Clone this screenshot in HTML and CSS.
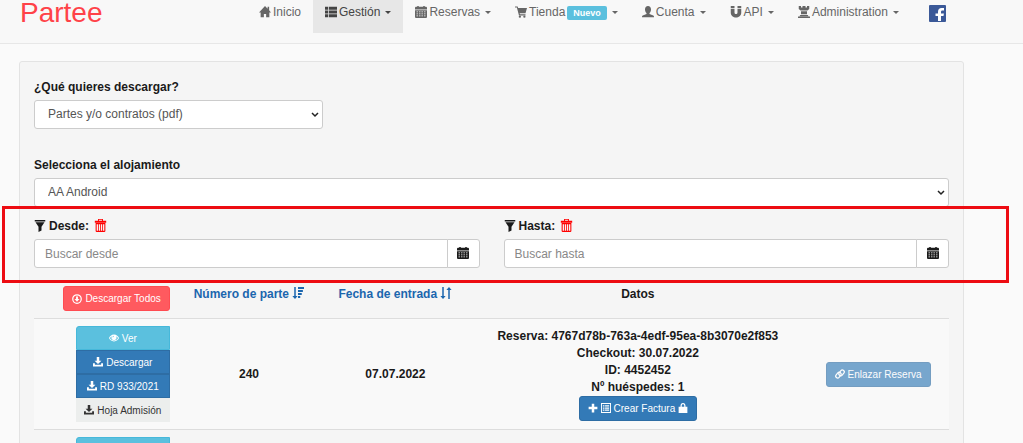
FILE: index.html
```
<!DOCTYPE html>
<html lang="es">
<head>
    <meta charset="UTF-8">
    <meta name="viewport" content="width=device-width, initial-scale=1.0">
    <title>Partee</title>
    <link rel="stylesheet" href="styles.css">
</head>
<body>
    <!-- Iconos -->
    <svg class="sprite" aria-hidden="true">
        <symbol id="i-home" viewBox="0 0 16 16"><path d="M8 0 0 8.500h2.200V15h4.300v-4.500h3V15h4.300V8.500H16l-2.500-2.700V1h-2v2.700z"/></symbol>
        <symbol id="i-list" viewBox="0 0 16 16"><path d="M0 1h4v4H0zM5 1h11v4H5zM0 6h4v4H0zM5 6h11v4H5zM0 11h4v4H0zM5 11h11v4H5z"/></symbol>
        <symbol id="i-calendar" viewBox="0 0 16 16"><path fill-rule="evenodd" d="M3 0h2v1h6V0h2v1h2l1 1v2.500H0V2l1-1h2zM0 5.500h16V15l-1 1H1l-1-1zM2 7.200v1h2v-1zm3.300 0v1h2v-1zm3.300 0v1h2v-1zm3.400 0v1h2v-1zM2 10v1h2v-1zm3.300 0v1h2v-1zm3.300 0v1h2v-1zm3.400 0v1h2v-1zM2 12.800v1h2v-1zm3.300 0v1h2v-1zm3.300 0v1h2v-1zm3.400 0v1h2v-1z"/></symbol>
        <symbol id="i-cart" viewBox="0 0 16 16"><path d="M0 .5h3.500l.7 2H16l-2 7H6.200l.4 1.500H14v1.500H5.300L2.500 2H0z"/><circle cx="6.500" cy="14.300" r="1.500"/><circle cx="12.500" cy="14.300" r="1.500"/></symbol>
        <symbol id="i-user" viewBox="0 0 16 16"><path d="M8 0c2.500 0 4 1.800 4 4.500 0 2-.8 3.800-2 4.800v1.200l5 2.200c.7.300 1 .8 1 1.500V15H0v-.8c0-.7.300-1.200 1-1.500l5-2.200V9.300c-1.200-1-2-2.800-2-4.800C4 1.800 5.500 0 8 0z"/></symbol>
        <symbol id="i-magnet" viewBox="0 0 16 16"><path d="M1 0h5v3H1zM10 0h5v3h-5zM1 4h5v4.500c0 3 4 3 4 0V4h5v4.500c0 9-14 9-14 0z"/></symbol>
        <symbol id="i-tower" viewBox="0 0 16 16"><path d="M1 0h3v2h2V0h4v2h2V0h3v4l-2.500 2h-9L1 4zM4 7h8v4H4zM3 12h10l1 1.500H2zM0 14h16v2H0z"/></symbol>
        <symbol id="i-filter" viewBox="0 0 16 16"><path d="M1 0h14v2H1zM2 3h12l-4 6v5l-4 2V9z"/></symbol>
        <symbol id="i-trash" viewBox="0 0 16 16"><path fill-rule="evenodd" d="M5 0h6v2h4v2.500H1V2h4zm1.200 1v1h3.600V1zM2 5h12v10l-1 1H3l-1-1zM3.300 6.500v8h1.600v-8zm2.600 0v8h1.600v-8zm2.600 0v8h1.600v-8zm2.600 0v8h1.600v-8z"/></symbol>
        <symbol id="i-down-circle" viewBox="0 0 16 16"><circle cx="8" cy="8" r="6.800" fill="none" stroke="currentColor" stroke-width="2"/><path d="M6.500 4h3v4H12l-4 4.500L4 8h2.500z"/></symbol>
        <symbol id="i-sort-size" viewBox="0 0 16 16"><path d="M3 0h2v12h2.500L4 16 .5 12H3zM8 0h8v2.500H8zM8 4h6.500v2.500H8zM8 8h5v2.500H8zM8 12h3v2.500H8z"/></symbol>
        <symbol id="i-sort" viewBox="0 0 16 16"><path d="M3 0h2v12h2.500L4 16 .5 12H3zM11 16V4H8.500L12 0l3.500 4H13v12z"/></symbol>
        <symbol id="i-eye" viewBox="0 0 16 16"><path fill-rule="evenodd" d="M8 2.500c4 0 7 3 8 5.500-1 2.500-4 5.500-8 5.500S1 10.500 0 8c1-2.500 4-5.500 8-5.500zM4.500 5C3 6 2 7 1.500 8c1 2 3.500 4 6.500 4s5.500-2 6.500-4c-.5-1-1.500-2-3-3 1.700 4-.5 6-3.500 6S2.800 9 4.500 5zm3-.5C6 4.600 5.500 6 6 7c1-.2 2-1 1.500-2.500z"/></symbol>
        <symbol id="i-save" viewBox="0 0 16 16"><path d="M6 0h4v6h3.500L8 11 2.500 6H6zM0 10h3v2.500h10V10h3v5H0z"/></symbol>
        <symbol id="i-plus" viewBox="0 0 16 16"><path d="M6 1h4v5h5v4h-5v5H6v-5H1V6h5z"/></symbol>
        <symbol id="i-sheet" viewBox="0 0 16 16"><path fill-rule="evenodd" d="M0 0h16v16H0zm1.500 1.500v13h13v-13zM3 3.500h2.500v2H3zm3.500 0H13v2H6.500zM3 7h2.500v2H3zm3.500 0H13v2H6.500zM3 10.500h2.500v2H3zm3.500 0H13v2H6.500z"/></symbol>
        <symbol id="i-lock" viewBox="0 0 16 16"><path fill-rule="evenodd" d="M4 6V4.500C4 2 5.500 0 8 0s4 2 4 4.500V6h3v10H1V6zm2 0h4V4.500C10 3 9.300 2 8 2S6 3 6 4.500z"/></symbol>
        <symbol id="i-link" viewBox="0 0 16 16"><g fill="none" stroke="currentColor" stroke-width="2"><rect x="5.500" y="3.200" width="10" height="6" rx="3" transform="rotate(-50 10.500 6.200)"/><rect x=".5" y="6.800" width="10" height="6" rx="3" transform="rotate(-50 5.500 9.800)"/></g></symbol>
    </svg>

    <header class="navbar">
        <a class="brand" href="#">Partee</a>
        <nav class="menu">
            <a class="menu-item" href="#"><svg class="icon"><use href="#i-home"/></svg>Inicio</a>
            <a class="menu-item active" href="#"><svg class="icon"><use href="#i-list"/></svg>Gestión<span class="caret"></span></a>
            <a class="menu-item" href="#"><svg class="icon"><use href="#i-calendar"/></svg>Reservas<span class="caret"></span></a>
            <a class="menu-item" href="#"><svg class="icon"><use href="#i-cart"/></svg>Tienda<span class="badge">Nuevo</span><span class="caret"></span></a>
            <a class="menu-item" href="#"><svg class="icon"><use href="#i-user"/></svg>Cuenta<span class="caret"></span></a>
            <a class="menu-item" href="#"><svg class="icon"><use href="#i-magnet"/></svg>API<span class="caret"></span></a>
            <a class="menu-item" href="#"><svg class="icon"><use href="#i-tower"/></svg>Administration<span class="caret"></span></a>
        </nav>
        <a class="facebook" href="#" aria-label="Facebook">
            <svg viewBox="0 0 17 17"><rect width="17" height="17" rx="1" fill="#3b5998"/><path fill="#fff" d="M9 16v-5H6.500V8.500H9V7c0-2.600 1.300-4 3.600-4H15v2.500h-1.500c-1.200 0-1.500.6-1.500 1.500v1.500h2.900l-.4 2.500H12v5z"/></svg>
        </a>
    </header>

    <main class="panel">
        <div class="field field-short">
            <label for="tipo">¿Qué quieres descargar?</label>
            <div class="select-wrap">
                <select id="tipo" class="control"><option>Partes y/o contratos (pdf)</option></select>
                <svg class="chevron" viewBox="0 0 8 6"><path d="M1 1l3 3 3-3"/></svg>
            </div>
        </div>

        <div class="field">
            <label for="alojamiento">Selecciona el alojamiento</label>
            <div class="select-wrap">
                <select id="alojamiento" class="control"><option>AA Android</option></select>
                <svg class="chevron" viewBox="0 0 8 6"><path d="M1 1l3 3 3-3"/></svg>
            </div>
        </div>

        <div class="filters">
            <div class="filter">
                <div class="filter-head">
                    <svg class="icon"><use href="#i-filter"/></svg>
                    <label for="desde">Desde:</label>
                    <button class="clear" type="button" aria-label="Borrar desde"><svg class="icon"><use href="#i-trash"/></svg></button>
                </div>
                <div class="input-group">
                    <input id="desde" class="control" type="text" placeholder="Buscar desde">
                    <button class="addon" type="button" aria-label="Calendario desde"><svg class="icon"><use href="#i-calendar"/></svg></button>
                </div>
            </div>
            <div class="filter">
                <div class="filter-head">
                    <svg class="icon"><use href="#i-filter"/></svg>
                    <label for="hasta">Hasta:</label>
                    <button class="clear" type="button" aria-label="Borrar hasta"><svg class="icon"><use href="#i-trash"/></svg></button>
                </div>
                <div class="input-group">
                    <input id="hasta" class="control" type="text" placeholder="Buscar hasta">
                    <button class="addon" type="button" aria-label="Calendario hasta"><svg class="icon"><use href="#i-calendar"/></svg></button>
                </div>
            </div>
            <div class="highlight"></div>
        </div>

        <table class="partes">
            <thead>
                <tr>
                    <th class="col-actions"><button class="btn btn-red" type="button"><svg class="icon"><use href="#i-down-circle"/></svg>Descargar Todos</button></th>
                    <th class="col-num"><a href="#">Número de parte <svg class="icon"><use href="#i-sort-size"/></svg></a></th>
                    <th class="col-date"><a href="#">Fecha de entrada <svg class="icon"><use href="#i-sort"/></svg></a></th>
                    <th class="col-data">Datos</th>
                    <th class="col-link"></th>
                </tr>
            </thead>
            <tbody>
                <tr>
                    <td class="col-actions">
                        <div class="btn-stack">
                            <button class="btn btn-info" type="button"><svg class="icon"><use href="#i-eye"/></svg>Ver</button>
                            <button class="btn btn-blue" type="button"><svg class="icon"><use href="#i-save"/></svg>Descargar</button>
                            <button class="btn btn-blue" type="button"><svg class="icon"><use href="#i-save"/></svg>RD 933/2021</button>
                            <button class="btn btn-grey" type="button"><svg class="icon"><use href="#i-save"/></svg>Hoja Admisión</button>
                        </div>
                    </td>
                    <td>240</td>
                    <td>07.07.2022</td>
                    <td class="datos">
                        <div>Reserva: 4767d78b-763a-4edf-95ea-8b3070e2f853</div>
                        <div>Checkout: 30.07.2022</div>
                        <div>ID: 4452452</div>
                        <div>Nº huéspedes: 1</div>
                        <button class="btn btn-blue" type="button"><svg class="icon"><use href="#i-plus"/></svg><svg class="icon"><use href="#i-sheet"/></svg>Crear Factura<svg class="icon"><use href="#i-lock"/></svg></button>
                    </td>
                    <td><button class="btn btn-blue btn-link" type="button" disabled><svg class="icon"><use href="#i-link"/></svg>Enlazar Reserva</button></td>
                </tr>
                <tr>
                    <td class="col-actions">
                        <div class="btn-stack">
                            <button class="btn btn-info" type="button" aria-label="Ver"></button>
                        </div>
                    </td>
                    <td></td>
                    <td></td>
                    <td></td>
                    <td></td>
                </tr>
            </tbody>
        </table>
    </main>
</body>
</html>
```
FILE: styles.css
```
:root {
    --blue: #337ab7;
    --info: #5bc0de;
    --red: #ff5a5f;
    --border: #ccc;
}

* {
    box-sizing: border-box;
}

html {
    overflow: hidden;
}

body {
    margin: 0;
    background: #fafafa;
    color: #1a1a1a;
    font-family: "Liberation Sans", Arial, sans-serif;
    font-size: 12px;
    line-height: 17px;
}

a {
    color: inherit;
    text-decoration: none;
}

button, input, select {
    font: inherit;
}

.sprite {
    display: none;
}

.icon {
    width: 12px;
    height: 12px;
    fill: currentColor;
    flex-shrink: 0;
}

/* Barra superior */
.navbar {
    display: flex;
    align-items: flex-start;
    padding: 0 20px 10px;
    background: #f8f8f8;
    border-bottom: 1px solid #e7e7e7;
}

.brand {
    width: 227px;
    color: #ff4248;
    font-size: 28px;
    line-height: 26px;
}

.menu {
    display: flex;
}

.menu-item {
    display: flex;
    align-items: center;
    gap: 2px;
    padding: 4px 12px 12px;
    color: #666;
    white-space: nowrap;
}

.menu-item .icon {
    margin-bottom: 2px;
}

.menu-item.active {
    background: #e7e7e7;
    color: #444;
}

.caret {
    margin-left: 3px;
    border-top: 3px solid;
    border-left: 3px solid transparent;
    border-right: 3px solid transparent;
}

.badge {
    padding: 0 6px;
    border-radius: 2px;
    background: var(--info);
    color: #fff;
    font-size: 9px;
    font-weight: bold;
    line-height: 14px;
}

.facebook {
    margin: 5px 0 0 18px;
}

.facebook svg {
    display: block;
    width: 17px;
    height: 17px;
}

/* Panel principal */
.panel {
    margin: 17px 59px 0 19px;
    padding: 17px 14px;
    background: #f5f5f5;
    border: 1px solid #e3e3e3;
    border-radius: 3px;
}

label {
    font-weight: bold;
}

.field label {
    display: block;
    margin-bottom: 4px;
}

.field-short {
    width: 289px;
    margin-bottom: 28px;
}

.control {
    width: 100%;
    height: 29px;
    padding: 0 10px;
    border: 1px solid var(--border);
    border-radius: 3px;
    background: #fff;
    color: #555;
}

.control::placeholder {
    color: #888;
}

.select-wrap {
    display: grid;
    align-items: center;
}

.select-wrap > * {
    grid-area: 1 / 1;
}

select.control {
    appearance: none;
    padding: 0 13px;
}

.chevron {
    justify-self: end;
    width: 8px;
    height: 6px;
    margin-right: 4px;
    fill: none;
    stroke: #222;
    stroke-width: 1.5;
    pointer-events: none;
}

.filters {
    position: relative;
    display: grid;
    grid-template-columns: 1fr 1fr;
    gap: 24px;
    padding: 11px 0 18px;
}

.filter-head {
    display: flex;
    align-items: center;
    gap: 3px;
    margin-bottom: 4px;
}

.filter-head .icon {
    margin-bottom: 2px;
}

.clear {
    display: flex;
    margin-left: 2px;
    padding: 0;
    border: 0;
    background: none;
    color: #f00;
}

.clear .icon {
    width: 13px;
    height: 13px;
}

.input-group {
    display: flex;
}

.input-group .control {
    border-radius: 3px 0 0 3px;
}

.addon {
    display: flex;
    align-items: center;
    justify-content: center;
    width: 33px;
    flex-shrink: 0;
    margin-left: -1px;
    padding: 0 0 2px;
    border: 1px solid var(--border);
    border-radius: 0 3px 3px 0;
    background: #fff;
    color: #1a1a1a;
}

/* Recuadro rojo sobre los filtros de fecha */
.highlight {
    position: absolute;
    inset: -1px -60px 3px -32px;
    border: 3px solid #ed0c12;
    pointer-events: none;
}

/* Tabla de partes */
.partes {
    width: 100%;
    border-collapse: collapse;
    table-layout: fixed;
    text-align: center;
    font-weight: bold;
}

.partes th {
    padding: 0 0 7px;
    vertical-align: top;
}

.partes th a {
    color: #1b66ae;
}

.partes th .icon {
    vertical-align: -1px;
}

.partes td {
    padding: 7px 0;
    border-top: 1px solid #ddd;
}

.partes tbody tr:nth-child(odd) {
    background: #f9f9f9;
}

.partes .col-actions {
    width: 15.5%;
    padding-right: 6px;
    text-align: right;
}

.col-num, .col-date {
    width: 16%;
}

.col-data {
    width: 37%;
}

.btn {
    display: inline-flex;
    align-items: center;
    justify-content: center;
    gap: 3px;
    height: 25px;
    padding: 0 8px;
    border: 1px solid transparent;
    border-radius: 3px;
    color: #fff;
    font-size: 10px;
    font-weight: normal;
    white-space: nowrap;
}

.btn .icon {
    width: 10px;
    height: 10px;
}

.btn-red {
    background: var(--red);
    border-color: #ff4b51;
}

.btn-info {
    background: var(--info);
    border-color: #46b8da;
}

.btn-blue {
    background: var(--blue);
    border-color: #2e6da4;
}

.btn-grey {
    background: #eceeed;
    color: #333;
}

.btn-link {
    opacity: 0.65;
}

.btn-stack {
    display: inline-flex;
    flex-direction: column;
    width: 94px;
    vertical-align: top;
}

.btn-stack .btn {
    height: 24px;
    padding: 0;
    border-radius: 0;
}

.btn-stack .btn:first-child {
    border-radius: 3px 0 0 0;
}
```
